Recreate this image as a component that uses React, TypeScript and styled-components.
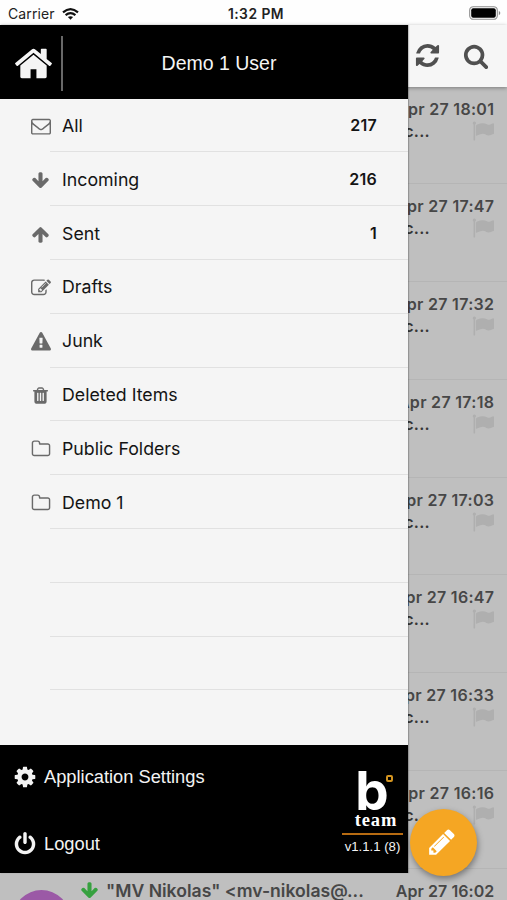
import React from "react";
import styled, { createGlobalStyle } from "styled-components";

const GlobalStyle = createGlobalStyle`
  * { box-sizing: border-box; }
  body { margin: 0; background: #fff; }
`;

const ui = `Inter, "Liberation Sans", sans-serif`;
const helvetica = `"Liberation Sans", Arial, sans-serif`;

const paths = {
  home: "M1472 992v480q0 26-19 45t-45 19h-384v-384h-256v384h-384q-26 0-45-19t-19-45v-480q0-1 .5-3t.5-3l575-474 575 474q1 2 1 6zm223-69l-62 74q-8 9-21 11h-3q-13 0-21-7l-692-577-692 577q-12 8-24 7-13-2-21-11l-62-74q-8-10-7-23.5t11-21.5l719-599q32-26 76-26t76 26l244 204v-195q0-14 9-23t23-9h192q14 0 23 9t9 23v408l219 182q10 8 11 21.5t-7 23.5z",
  envelope: "M1664 1504v-768q-32 36-69 66-268 206-426 338-51 43-83 67t-86.5 48.5-102.5 24.5h-2q-48 0-102.5-24.5t-86.5-48.5-83-67q-158-132-426-338-37-30-69-66v768q0 13 9.5 22.5t22.5 9.5h1472q13 0 22.5-9.5t9.5-22.5zm0-1051v-24.5l-.5-13-3-12.5-5.5-9-9-7.5-14-2.5h-1472q-13 0-22.5 9.5t-9.5 22.5q0 168 147 284 193 152 401 317 6 5 35 29.5t46 37.5 44.5 31.5 50.5 27.5 43 9h2q20 0 43-9t50.5-27.5 44.5-31.5 46-37.5 35-29.5q208-165 401-317 54-43 100.5-115.5t46.5-131.5zm128-37v1088q0 66-47 113t-113 47h-1472q-66 0-113-47t-47-113v-1088q0-66 47-113t113-47h1472q66 0 113 47t47 113z",
  down: "M1675 832q0 53-37 90l-651 652q-39 37-91 37-53 0-90-37l-651-652q-38-36-38-90 0-53 38-91l74-75q39-37 91-37 53 0 90 37l294 294v-704q0-52 38-90t90-38h128q52 0 90 38t38 90v704l294-294q37-37 90-37 52 0 91 37l75 75q37 39 37 91z",
  up: "M1675 971q0 51-37 90l-75 75q-38 38-91 38-54 0-90-38l-294-293v704q0 52-37.5 84.5t-90.5 32.5h-128q-53 0-90.5-32.5t-37.5-84.5v-704l-294 293q-36 38-90 38t-90-38l-75-75q-38-38-38-90 0-53 38-91l651-651q35-37 90-37 54 0 91 37l651 651q37 39 37 91z",
  edit: "M888 1184l116-116-152-152-116 116v56h96v96h56zm440-720q-16-16-33 1l-350 350q-17 17-1 33t33-1l350-350q17-17 1-33zm80 594v190q0 119-84.5 203.5t-203.5 84.5h-832q-119 0-203.5-84.5t-84.5-203.5v-832q0-119 84.5-203.5t203.5-84.5h832q63 0 117 25 15 7 18 23 3 17-9 29l-49 49q-14 14-32 8-23-6-45-6h-832q-66 0-113 47t-47 113v832q0 66 47 113t113 47h832q66 0 113-47t47-113v-126q0-13 9-22l64-64q15-15 35-7t20 29zm-96-738l288 288-672 672h-288v-288zm444 132l-92 92-288-288 92-92q28-28 68-28t68 28l152 152q28 28 28 68t-28 68z",
  warning: "M1024 1375v-190q0-14-9.5-23.5t-22.5-9.5h-192q-13 0-22.5 9.5t-9.5 23.5v190q0 14 9.5 23.5t22.5 9.5h192q13 0 22.5-9.5t9.5-23.5zm-2-374l18-459q0-12-10-19-13-11-24-11h-220q-11 0-24 11-10 7-10 21l17 457q0 10 10 16.5t24 6.5h185q14 0 23.5-6.5t10.5-16.5zm-14-934l768 1408q35 63-2 126-17 29-46.5 46t-63.5 17h-1536q-34 0-63.5-17t-46.5-46q-37-63-2-126l768-1408q17-31 47-49t65-18 65 18 47 49z",
  trash: "M704 1376v-704q0-14-9-23t-23-9h-64q-14 0-23 9t-9 23v704q0 14 9 23t23 9h64q14 0 23-9t9-23zm256 0v-704q0-14-9-23t-23-9h-64q-14 0-23 9t-9 23v704q0 14 9 23t23 9h64q14 0 23-9t9-23zm256 0v-704q0-14-9-23t-23-9h-64q-14 0-23 9t-9 23v704q0 14 9 23t23 9h64q14 0 23-9t9-23zm-544-992h448l-48-117q-7-9-17-11h-317q-10 2-17 11zm928 32v64q0 14-9 23t-23 9h-96v948q0 83-47 143.5t-113 60.5h-832q-66 0-113-58.5t-47-141.5v-952h-96q-14 0-23-9t-9-23v-64q0-14 9-23t23-9h309l70-167q15-37 54-63t79-26h320q40 0 79 26t54 63l70 167h309q14 0 23 9t9 23z",
  folder: "M1600 1312v-704q0-40-28-68t-68-28h-704q-40 0-68-28t-28-68v-64q0-40-28-68t-68-28h-320q-40 0-68 28t-28 68v960q0 40 28 68t68 28h1216q40 0 68-28t28-68zm128-704v704q0 92-66 158t-158 66h-1216q-92 0-158-66t-66-158v-960q0-92 66-158t158-66h320q92 0 158 66t66 158v32h672q92 0 158 66t66 158z",
  refresh: "M1639 1056q0 5-1 7-64 268-268 434.5t-478 166.5q-146 0-282.5-55t-243.5-157l-129 129q-19 19-45 19t-45-19-19-45v-448q0-26 19-45t45-19h448q26 0 45 19t19 45-19 45l-137 137q71 66 161 102t187 36q134 0 250-65t186-179q11-17 53-117 8-23 30-23h192q13 0 22.5 9.5t9.5 22.5zm25-800v448q0 26-19 45t-45 19h-448q-26 0-45-19t-19-45 19-45l138-138q-148-137-349-137-134 0-250 65t-186 179q-11 17-53 117-8 23-30 23h-199q-13 0-22.5-9.5t-9.5-22.5v-7q65-268 270-434.5t480-166.5q146 0 284 55.5t245 156.5l130-129q19-19 45-19t45 19 19 45z",
  search: "M1216 832q0-185-131.5-316.5t-316.5-131.5-316.5 131.5-131.5 316.5 131.5 316.5 316.5 131.5 316.5-131.5 131.5-316.5zm512 832q0 52-38 90t-90 38q-54 0-90-38l-343-342q-179 124-399 124-143 0-273.5-55.5t-225-150-150-225-55.5-273.5 55.5-273.5 150-225 225-150 273.5-55.5 273.5 55.5 225 150 150 225 55.5 273.5q0 220-124 399l343 343q37 37 37 90z",
  cog: "M1152 896q0-106-75-181t-181-75-181 75-75 181 75 181 181 75 181-75 75-181zm512-109v222q0 12-8 23t-20 13l-185 28q-19 54-39 91 35 50 107 138 10 12 10 25t-9 23q-27 37-99 108t-94 71q-12 0-26-9l-138-108q-44 23-91 38-16 136-29 186-7 28-36 28h-222q-14 0-24.5-8.5t-11.5-21.5l-28-184q-49-16-90-37l-141 107q-10 9-25 9-14 0-25-11-126-114-165-168-7-10-7-23 0-12 8-23 15-21 51-66.5t54-70.5q-27-50-41-99l-183-27q-13-2-21-12.5t-8-23.5v-222q0-12 8-23t19-13l186-28q14-46 39-92-40-57-107-138-10-12-10-24 0-10 9-23 26-36 98.5-107.5t94.5-71.5q13 0 26 10l138 107q44-23 91-38 16-136 29-186 7-28 36-28h222q14 0 24.5 8.5t11.5 21.5l28 184q49 16 90 37l142-107q9-9 24-9 13 0 25 10 129 119 165 170 7 8 7 22 0 12-8 23-15 21-51 66.5t-54 70.5q26 50 41 98l183 28q13 2 21 12.5t8 23.5z",
  power: "M1664 896q0 156-61 298t-164 245-245 164-298 61-298-61-245-164-164-245-61-298q0-182 80.5-343t226.5-270q43-32 95.5-25t83.5 50q32 42 24.5 94.5t-49.5 84.5q-98 74-151.5 181t-53.5 228q0 104 40.5 198.5t109.5 163.5 163.5 109.5 198.5 40.5 198.5-40.5 163.5-109.5 109.5-163.5 40.5-198.5q0-121-53.5-228t-151.5-181q-42-32-49.5-84.5t24.5-94.5q31-43 84-50t95 25q146 109 226.5 270t80.5 343zm-640-768v640q0 52-38 90t-90 38-90-38-38-90v-640q0-52 38-90t90-38 90 38 38 90z",
  pencil: "M491 1536l91-91-235-235-91 91v107h128v128h107zm523-928q0-22-22-22-10 0-17 7l-542 542q-7 7-7 17 0 22 22 22 10 0 17-7l542-542q7-7 7-17zm-54-192l416 416-832 832h-416v-416zm683 96q0 53-37 90l-166 166-416-416 166-165q36-38 90-38 53 0 91 38l235 234q37 39 37 91z",
  flag: "M320 256q0 72-64 110v1266q0 13-9.5 22.5t-22.5 9.5h-64q-13 0-22.5-9.5t-9.5-22.5v-1266q-64-38-64-110 0-53 37.5-90.5t90.5-37.5 90.5 37.5 37.5 90.5zm1472 64v763q0 25-12.5 38.5t-39.5 27.5q-215 116-369 116-61 0-123.5-22t-108.5-48-115.5-48-142.5-22q-192 0-464 146-17 9-33 9-26 0-45-19t-19-45v-742q0-32 31-55 21-14 79-43 236-120 421-120 107 0 200 29t219 88q38 19 88 19 54 0 117.5-21t110-47 88-47 54.5-21q26 0 45 19t19 45z",
};

type IconName = keyof typeof paths;

const Svg = styled.svg`
  display: block;
  flex: none;
  fill: currentColor;
  overflow: visible;
`;

const Icon = ({ name, size }: { name: IconName; size: number }) => (
  <Svg width={size} height={size} viewBox="0 0 1792 1792" aria-hidden="true">
    <path d={paths[name]} />
  </Svg>
);

const Screen = styled.div`
  position: relative;
  width: 507px;
  height: 900px;
  overflow: hidden;
  display: flex;
  flex-direction: column;
  background: #bfbfbf;
  font-family: ${ui};
`;

const StatusBar = styled.header`
  flex: none;
  height: 25px;
  padding: 2px 6px 0 8px;
  display: grid;
  grid-template-columns: 1fr auto 1fr;
  align-items: center;
  background: #fefefe;
  color: #222;
`;

const Carrier = styled.div`
  display: flex;
  align-items: center;
  gap: 7px;
  font-size: 14px;
  letter-spacing: 0.1px;
`;

const Clock = styled.div`
  font-size: 13.8px;
  font-weight: 600;
  letter-spacing: 0.5px;
  padding-left: 3px;
`;

const Battery = styled.div`
  justify-self: end;
  display: flex;
  margin-top: -2px;
`;

const Toolbar = styled.div`
  flex: none;
  position: relative;
  height: 61.5px;
  padding: 0 18px 0 0;
  display: flex;
  justify-content: flex-end;
  align-items: center;
  gap: 22px;
  background: #f6f6f6;
  color: #505050;
  box-shadow: 0 1px 4px rgba(0, 0, 0, 0.35);
`;

const MailList = styled.main`
  flex: 1;
  min-height: 0;
  overflow: hidden;
`;

const MailRow = styled.article`
  height: 97.75px;
  padding: 11px 13px 0 13px;
  display: grid;
  grid-template-columns: 57px 1fr;
  column-gap: 10px;
  border-bottom: 1px solid #b5b5b5;
  color: #474747;
  font-size: 16px;
  font-weight: 600;
  line-height: 22px;
`;

const MailBody = styled.div`
  grid-column: 2;
`;

const MailHead = styled.div`
  display: flex;
  align-items: center;
  white-space: nowrap;
`;

const Sender = styled.span`
  margin-left: 7px;
  font-size: 17.6px;
`;

const Direction = styled.span`
  color: #36a13f;
`;

const MailDate = styled.time<{ $tight?: boolean }>`
  margin-left: auto;
  margin-right: -0.3px;
  letter-spacing: ${(p) => (p.$tight ? "0.05px" : "0.3px")};
`;

const MailSubject = styled.div`
  display: flex;
  justify-content: flex-end;
  align-items: center;
  gap: 42px;
  color: #363636;
  letter-spacing: 0.3px;
`;

const Flag = styled.span`
  color: #afafaf;
`;

const Avatar = styled.div`
  width: 57px;
  height: 57px;
  margin-top: 10px;
  border-radius: 50%;
  background: #9b59a6;
`;

const Drawer = styled.aside`
  position: absolute;
  z-index: 2;
  top: 25px;
  left: 0;
  width: 408px;
  height: 848px;
  display: flex;
  flex-direction: column;
  background: #f5f5f5;
  box-shadow: 1px 0 1px rgba(0, 0, 0, 0.22);
`;

const DrawerHeader = styled.div`
  flex: none;
  height: 73.5px;
  padding-top: 3px;
  display: flex;
  align-items: center;
  background: #000;
  color: #f5f5f5;
  font-family: ${helvetica};
`;

const HomeButton = styled.div`
  width: 63px;
  height: 55px;
  padding-left: 13px;
  display: flex;
  align-items: center;
  border-right: 2px solid #686868;
`;

const UserName = styled.div`
  flex: 1;
  padding-right: 33px;
  text-align: center;
  font-size: 19.5px;
`;

const FolderList = styled.nav`
  flex: 1;
`;

const FolderRow = styled.div`
  height: 53.82px;
  display: flex;
  padding-left: 31px;
`;

const FolderIcon = styled.span`
  width: 19px;
  display: flex;
  align-items: center;
  justify-content: center;
  padding-top: 2px;
  color: #6a6a6a;
`;

const FolderContent = styled.div`
  flex: 1;
  display: flex;
  align-items: center;
  justify-content: space-between;
  padding: 1px 31px 0 12px;
  border-bottom: 1px solid #e1e1e1;
  color: #141414;
  font-size: 17.75px;
`;

const Count = styled.span`
  font-size: 16px;
  font-weight: 600;
  letter-spacing: 0.25px;
`;

const DrawerFooter = styled.footer`
  flex: none;
  height: 128.5px;
  display: flex;
  justify-content: space-between;
  background: #000;
  color: #f3f3f3;
  font-family: ${helvetica};
`;

const Actions = styled.div`
  padding: 20px 0 0 13px;
  display: flex;
  flex-direction: column;
  gap: 43px;
`;

const Action = styled.div`
  display: flex;
  align-items: center;
  gap: 7px;
  height: 24px;
  font-size: 18.3px;
`;

const Brand = styled.div`
  width: 61px;
  margin-right: 5px;
  padding-top: 24px;
  display: flex;
  flex-direction: column;
  align-items: center;
`;

const Monogram = styled.div`
  position: relative;
  height: 43px;
  margin-right: 1px;
  color: #fff;
  font: 700 53px/45px ${ui};
`;

const Spark = styled.span`
  position: absolute;
  top: 6px;
  right: -4px;
  width: 7px;
  height: 7px;
  border: 2px solid #d39420;
  border-radius: 2px;
`;

const Team = styled.div`
  color: #fff;
  font: 700 18.5px/16px "Liberation Serif", serif;
  letter-spacing: 0.9px;
  padding-left: 7px;
`;

const Version = styled.div`
  width: 61px;
  margin-top: 5px;
  padding-top: 3px;
  border-top: 2px solid #b76b12;
  font-size: 13.2px;
  line-height: 17px;
  text-align: center;
  white-space: nowrap;
`;

const ComposeButton = styled.button`
  position: absolute;
  z-index: 3;
  left: 409.5px;
  top: 808.5px;
  width: 67px;
  height: 67px;
  padding: 0 3px 0 0;
  border: 0;
  border-radius: 50%;
  display: flex;
  align-items: center;
  justify-content: center;
  background: #f5a623;
  color: #fff;
  box-shadow: 1px 3px 6px rgba(0, 0, 0, 0.38);
`;

const folders: { icon?: IconName; label?: string; count?: number; size?: number }[] = [
  { icon: "envelope", label: "All", count: 217, size: 20 },
  { icon: "down", label: "Incoming", count: 216, size: 19 },
  { icon: "up", label: "Sent", count: 1, size: 19 },
  { icon: "edit", label: "Drafts", size: 20 },
  { icon: "warning", label: "Junk", size: 20 },
  { icon: "trash", label: "Deleted Items", size: 19 },
  { icon: "folder", label: "Public Folders", size: 20 },
  { icon: "folder", label: "Demo 1", size: 20 },
  {},
  {},
  {},
];

const times = ["18:01", "17:47", "17:32", "17:18", "17:03", "16:47", "16:33", "16:16"];

export default function App() {
  return (
    <>
      <GlobalStyle />
      <Screen>
        <StatusBar>
          <Carrier>
            Carrier
            <svg width="17" height="12" viewBox="0 0 17 12" fill="none" stroke="#111" strokeWidth="2.2">
              <path d="M1 4.4 Q8.5-2 16 4.4" />
              <path d="M3.6 7.1 Q8.5 3 13.4 7.1" />
              <path d="M8.5 11.8 L5.9 9.1 Q8.5 7.2 11.1 9.1Z" fill="#111" stroke="none" />
            </svg>
          </Carrier>
          <Clock>1:32 PM</Clock>
          <Battery>
            <svg width="32" height="14" viewBox="0 0 32 14">
              <rect x="0.7" y="0.7" width="27.6" height="12.6" rx="3.6" fill="#fff" stroke="#8d8d8d" strokeWidth="1.1" />
              <rect x="2.2" y="2.2" width="24.6" height="9.6" rx="2" fill="#000" />
              <path d="M29.8 5v4.2q1.5-.7 1.5-2.1t-1.5-2.1z" fill="#888" />
            </svg>
          </Battery>
        </StatusBar>
        <Toolbar>
          <Icon name="refresh" size={27} />
          <Icon name="search" size={26} />
        </Toolbar>
        <MailList>
          {times.map((time) => (
            <MailRow key={time}>
              <MailBody>
                <MailHead>
                  <MailDate>Apr 27 {time}</MailDate>
                </MailHead>
                <MailSubject>
                  c...
                  <Flag>
                    <Icon name="flag" size={22} />
                  </Flag>
                </MailSubject>
              </MailBody>
            </MailRow>
          ))}
          <MailRow>
            <Avatar />
            <MailBody>
              <MailHead>
                <Direction>
                  <Icon name="down" size={19} />
                </Direction>
                <Sender>"MV Nikolas" &lt;mv-nikolas@...</Sender>
                <MailDate $tight>Apr 27 16:02</MailDate>
              </MailHead>
            </MailBody>
          </MailRow>
        </MailList>

        <Drawer>
          <DrawerHeader>
            <HomeButton>
              <Icon name="home" size={41} />
            </HomeButton>
            <UserName>Demo 1 User</UserName>
          </DrawerHeader>
          <FolderList>
            {folders.map((folder, index) => (
              <FolderRow key={index}>
                <FolderIcon>{folder.icon && <Icon name={folder.icon} size={folder.size ?? 20} />}</FolderIcon>
                <FolderContent>
                  <span>{folder.label}</span>
                  {folder.count !== undefined && <Count>{folder.count}</Count>}
                </FolderContent>
              </FolderRow>
            ))}
          </FolderList>
          <DrawerFooter>
            <Actions>
              <Action>
                <Icon name="cog" size={24} />
                Application Settings
              </Action>
              <Action>
                <Icon name="power" size={24} />
                Logout
              </Action>
            </Actions>
            <Brand>
              <Monogram>
                b<Spark />
              </Monogram>
              <Team>team</Team>
              <Version>v1.1.1 (8)</Version>
            </Brand>
          </DrawerFooter>
        </Drawer>
        <ComposeButton aria-label="Compose">
          <Icon name="pencil" size={30} />
        </ComposeButton>
      </Screen>
    </>
  );
}
